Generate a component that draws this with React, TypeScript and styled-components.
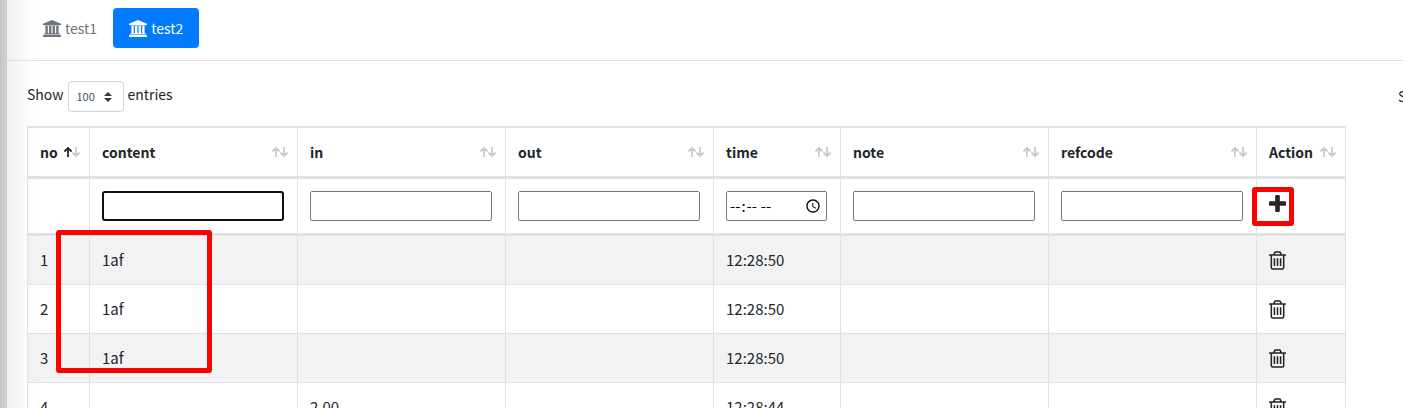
import React from "react";
import styled, { createGlobalStyle, css } from "styled-components";

const GlobalStyle = createGlobalStyle`
  *, *::before, *::after { box-sizing: border-box; }
  html, body, #root { height: 100%; }
  body {
    margin: 0;
    overflow: hidden;
    background: #fff;
    color: #212529;
    font-family: "Noto Sans CJK SC", "Liberation Sans", sans-serif;
    font-size: 14px;
    line-height: 24px;
  }
`;

const Shell = styled.div`
  display: flex;
  height: 100%;
`;

const SidebarEdge = styled.aside`
  flex: none;
  width: 7px;
  background: linear-gradient(to right, #c3c4c8, #d2d3d6);
  border-right: 1px solid #c8c9cc;
`;

const Main = styled.main`
  flex: 1;
  min-width: 0;
  overflow: hidden;
  background: linear-gradient(to right, #f1f1f1, #fff 28px);
`;

const TabBar = styled.nav`
  display: flex;
  padding: 8px 20px 12px;
  border-bottom: 1px solid #dee2e6;
`;

const Tab = styled.button<{ $active?: boolean }>`
  display: flex;
  align-items: center;
  gap: 4px;
  height: 40px;
  padding: 0 16px;
  border: 0;
  border-radius: 4px;
  background: ${(p) => (p.$active ? "#007bff" : "transparent")};
  color: ${(p) => (p.$active ? "#fff" : "#6c757d")};
  font: inherit;
`;

const Content = styled.section`
  padding: 20px 57px 0 20px;
`;

const Toolbar = styled.div`
  display: flex;
  justify-content: space-between;
  margin-right: -57px;
  padding-bottom: 14px;
`;

const LengthLabel = styled.label`
  display: flex;
  gap: 4px;
  line-height: 27px;
`;

const SelectBox = styled.span`
  position: relative;
  display: flex;
`;

const LengthSelect = styled.select`
  appearance: none;
  width: 56px;
  height: 31px;
  padding: 0 8px;
  border: 1px solid #ced4da;
  border-radius: 4px;
  background: #fff;
  color: #495057;
  font: inherit;
  font-size: 11px;
`;

const SelectArrows = styled.svg`
  position: absolute;
  right: 12px;
  top: 11px;
  pointer-events: none;
`;

const SearchLabel = styled.label`
  flex: 0 0 5px;
  width: 5px;
  min-width: 0;
  white-space: nowrap;
  line-height: 31px;
`;

const Table = styled.table`
  width: 100%;
  table-layout: fixed;
  border-collapse: separate;
  border-spacing: 0;
  border: solid #dee2e6;
  border-width: 2px 0 0 1px;
`;

const Col = styled.col<{ $width?: number }>`
  ${(p) => p.$width && css`width: ${p.$width}px;`}
`;

const HeadCell = styled.th`
  height: 51px;
  padding: 0 8px 0 12px;
  border: solid #dee2e6;
  border-width: 0 1px 3px 0;
  text-align: left;
  font-weight: 700;
`;

const HeadInner = styled.div`
  display: flex;
  align-items: center;
  justify-content: space-between;
`;

const FilterCell = styled.td`
  height: 57px;
  padding: 0 13px 0 12px;
  border: solid #dee2e6;
  border-width: 0 1px 3px 0;
`;

const FieldBox = styled.div`
  display: flex;
`;

const Field = styled.input<{ $focused?: boolean }>`
  width: 100%;
  height: 30px;
  padding: 1px 2px;
  border: ${(p) => (p.$focused ? "2px solid #101010" : "1px solid #767676")};
  border-radius: ${(p) => (p.$focused ? 3 : 2)}px;
  background: #fff;
  color: #000;
  font: inherit;
  font-size: 15px;
  outline: 0;
`;

const Row = styled.tr`
  &:nth-child(odd) { background: rgba(0, 0, 0, 0.05); }
`;

const Cell = styled.td`
  height: 49px;
  padding: 0 12px;
  border: solid #dee2e6;
  border-width: 0 1px 1px 0;
  font-size: 15px;
`;

const IconButton = styled.button<{ $raised?: boolean }>`
  display: flex;
  padding: 0 0 ${(p) => (p.$raised ? 6 : 0)}px;
  border: 0;
  background: none;
  color: #212529;
`;

const Marker = styled.div<{ $x: number; $y: number; $w: number; $h: number }>`
  position: absolute;
  left: ${(p) => p.$x}px;
  top: ${(p) => p.$y}px;
  width: ${(p) => p.$w}px;
  height: ${(p) => p.$h}px;
  border: 5px solid #f00;
  border-radius: 3px;
  pointer-events: none;
`;

const TableArea = styled.div`
  position: relative;
`;

const BankIcon = () => (
  <svg width="18" height="17" viewBox="0 0 1920 1792" fill="currentColor" aria-hidden="true">
    <path d="M960 0l960 384v128h-128q0 26-20.5 45t-48.5 19h-1526q-28 0-48.5-19t-20.5-45h-128v-128zm-704 640h256v768h128v-768h256v768h128v-768h256v768h128v-768h256v768h59q28 0 48.5 19t20.5 45v64h-1664v-64q0-26 20.5-45t48.5-19h59v-768zm1595 960q28 0 48.5 19t20.5 45v128h-1920v-128q0-26 20.5-45t48.5-19h1782z" />
  </svg>
);

const PlusIcon = () => (
  <svg width="17" height="17" viewBox="192 128 1408 1408" fill="currentColor" aria-hidden="true">
    <path d="M1600 736v192q0 40-28 68t-68 28h-416v416q0 40-28 68t-68 28h-192q-40 0-68-28t-28-68v-416h-416q-40 0-68-28t-28-68v-192q0-40 28-68t68-28h416v-416q0-40 28-68t68-28h192q40 0 68 28t28 68v416h416q40 0 68 28t28 68z" />
  </svg>
);

const TrashIcon = () => (
  <svg width="17" height="19" viewBox="192 128 1408 1536" fill="currentColor" aria-hidden="true">
    <path d="M704 736v576q0 14-9 23t-23 9h-64q-14 0-23-9t-9-23v-576q0-14 9-23t23-9h64q14 0 23 9t9 23zm256 0v576q0 14-9 23t-23 9h-64q-14 0-23-9t-9-23v-576q0-14 9-23t23-9h64q14 0 23 9t9 23zm256 0v576q0 14-9 23t-23 9h-64q-14 0-23-9t-9-23v-576q0-14 9-23t23-9h64q14 0 23 9t9 23zm128 724v-948h-896v948q0 22 7 40.5t14.5 27 10.5 8.5h832q3 0 10.5-8.5t14.5-27 7-40.5zm-672-1076h448l-48-117q-7-9-17-11h-317q-10 2-17 11zm928 32v64q0 14-9 23t-23 9h-96v948q0 83-47 143.5t-113 60.5h-832q-66 0-113-58.5t-47-141.5v-952h-96q-14 0-23-9t-9-23v-64q0-14 9-23t23-9h309l70-167q15-37 54-63t79-26h320q40 0 79 26t54 63l70 167h309q14 0 23 9t9 23z" />
  </svg>
);

const SortArrows = ({ ascending }: { ascending?: boolean }) => (
  <svg width="18" height="12" viewBox="0 0 18 12" fill="none" strokeWidth="1.8" aria-hidden="true">
    <path d="M13 1V10M9.4 6.5L13 10L16.6 6.5" stroke="#c8c9ca" />
    <path d="M5 11V2M1.4 5.5L5 2L8.6 5.5" stroke={ascending ? "#212529" : "#c8c9ca"} />
  </svg>
);

const columns: { name: string; width?: number }[] = [
  { name: "no", width: 62 },
  { name: "content" },
  { name: "in" },
  { name: "out" },
  { name: "time", width: 127 },
  { name: "note" },
  { name: "refcode" },
  { name: "Action", width: 89 },
];

const rows = [
  ["1", "1af", "", "", "12:28:50", "", ""],
  ["2", "1af", "", "", "12:28:50", "", ""],
  ["3", "1af", "", "", "12:28:50", "", ""],
  ["4", "", "2.00", "", "12:28:44", "", ""],
];

function FilterControl({ name }: { name: string }) {
  if (name === "no") return null;
  if (name === "Action") {
    return (
      <IconButton type="button" aria-label="Add row" $raised>
        <PlusIcon />
      </IconButton>
    );
  }
  return (
    <FieldBox>
      <Field aria-label={name} type={name === "time" ? "time" : "text"} $focused={name === "content"} />
    </FieldBox>
  );
}

export default function App() {
  return (
    <>
      <GlobalStyle />
      <Shell>
        <SidebarEdge />
        <Main>
          <TabBar>
            <Tab type="button"><BankIcon />test1</Tab>
            <Tab type="button" $active><BankIcon />test2</Tab>
          </TabBar>
          <Content>
            <Toolbar>
              <LengthLabel>
                Show
                <SelectBox>
                  <LengthSelect defaultValue="100">
                    <option>100</option>
                  </LengthSelect>
                  <SelectArrows width="8" height="10" viewBox="0 0 4 5">
                    <path fill="#343a40" d="M2 0L0 2h4zm0 5L0 3h4z" />
                  </SelectArrows>
                </SelectBox>
                entries
              </LengthLabel>
              <SearchLabel>
                Search: <input type="search" />
              </SearchLabel>
            </Toolbar>
            <TableArea>
              <Table>
                <colgroup>
                  {columns.map((c) => <Col key={c.name} $width={c.width} />)}
                </colgroup>
                <thead>
                  <tr>
                    {columns.map((c) => (
                      <HeadCell key={c.name}>
                        <HeadInner>
                          {c.name}
                          <SortArrows ascending={c.name === "no"} />
                        </HeadInner>
                      </HeadCell>
                    ))}
                  </tr>
                  <tr>
                    {columns.map((c) => (
                      <FilterCell key={c.name}><FilterControl name={c.name} /></FilterCell>
                    ))}
                  </tr>
                </thead>
                <tbody>
                  {rows.map((r) => (
                    <Row key={r[0]}>
                      {r.map((v, i) => <Cell key={i}>{v}</Cell>)}
                      <Cell>
                        <IconButton type="button" aria-label={`Delete row ${r[0]}`}>
                          <TrashIcon />
                        </IconButton>
                      </Cell>
                    </Row>
                  ))}
                </tbody>
              </Table>
              <Marker $x={29} $y={104} $w={156} $h={143} />
              <Marker $x={1225} $y={61} $w={42} $h={39} />
            </TableArea>
          </Content>
        </Main>
      </Shell>
    </>
  );
}
